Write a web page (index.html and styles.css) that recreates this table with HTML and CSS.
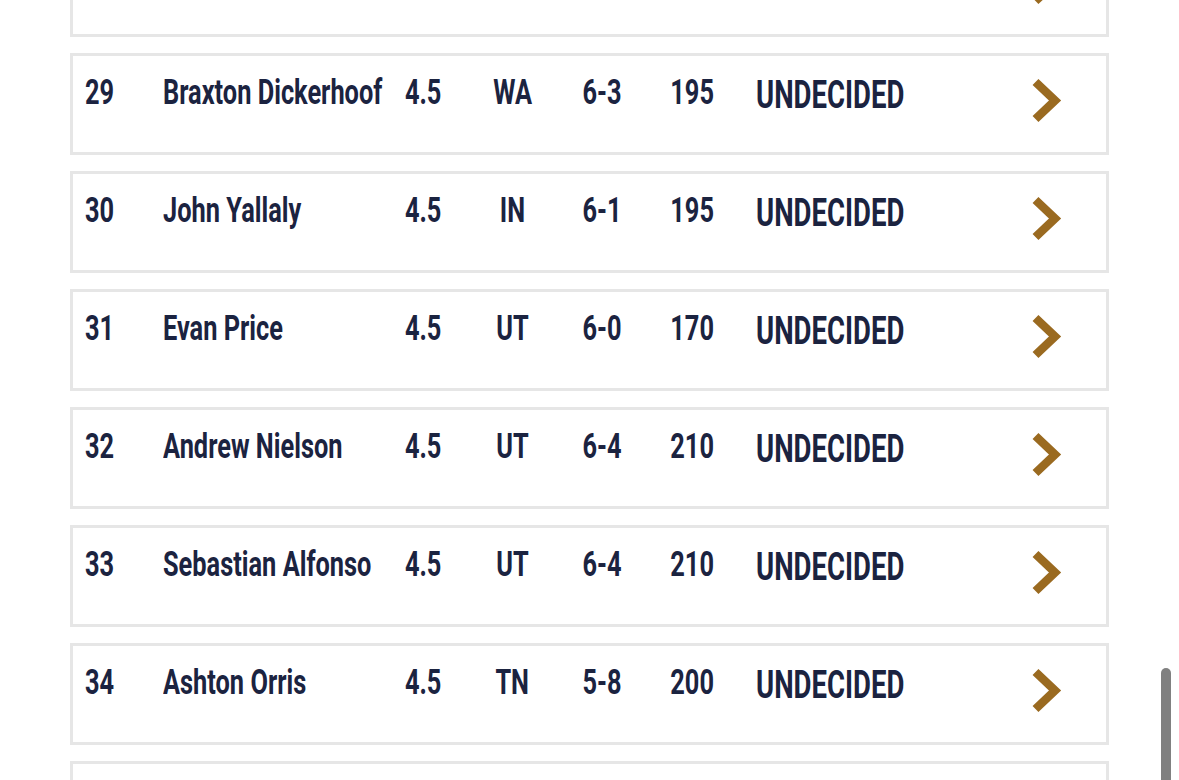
FILE: index.html
```html
<!DOCTYPE html>
<html lang="en">
<head>
<meta charset="utf-8">
<title>Rankings</title>
<link rel="stylesheet" href="styles.css">
</head>
<body>
<main class="board">
  <ul class="list">
    <li class="row">
      <span class="cell rank"></span>
      <span class="cell name"></span>
      <span class="cell num"></span>
      <span class="cell mid"></span>
      <span class="cell mid"></span>
      <span class="cell mid"></span>
      <span class="cell status"></span>
      <span class="cell go"><svg class="chev" viewBox="0 0 32 48" width="32" height="48"><polyline points="5.5,6 25,24.5 5.5,43"/></svg></span>
    </li>
    <li class="row">
      <span class="cell rank"><span class="t">29</span></span>
      <span class="cell name"><span class="t">Braxton Dickerhoof</span></span>
      <span class="cell num"><span class="t">4.5</span></span>
      <span class="cell mid"><span class="t">WA</span></span>
      <span class="cell mid"><span class="t">6-3</span></span>
      <span class="cell mid"><span class="t">195</span></span>
      <span class="cell status"><span class="t">UNDECIDED</span></span>
      <span class="cell go"><svg class="chev" viewBox="0 0 32 48" width="32" height="48"><polyline points="5.5,6 25,24.5 5.5,43"/></svg></span>
    </li>
    <li class="row">
      <span class="cell rank"><span class="t">30</span></span>
      <span class="cell name"><span class="t">John Yallaly</span></span>
      <span class="cell num"><span class="t">4.5</span></span>
      <span class="cell mid"><span class="t">IN</span></span>
      <span class="cell mid"><span class="t">6-1</span></span>
      <span class="cell mid"><span class="t">195</span></span>
      <span class="cell status"><span class="t">UNDECIDED</span></span>
      <span class="cell go"><svg class="chev" viewBox="0 0 32 48" width="32" height="48"><polyline points="5.5,6 25,24.5 5.5,43"/></svg></span>
    </li>
    <li class="row">
      <span class="cell rank"><span class="t">31</span></span>
      <span class="cell name"><span class="t">Evan Price</span></span>
      <span class="cell num"><span class="t">4.5</span></span>
      <span class="cell mid"><span class="t">UT</span></span>
      <span class="cell mid"><span class="t">6-0</span></span>
      <span class="cell mid"><span class="t">170</span></span>
      <span class="cell status"><span class="t">UNDECIDED</span></span>
      <span class="cell go"><svg class="chev" viewBox="0 0 32 48" width="32" height="48"><polyline points="5.5,6 25,24.5 5.5,43"/></svg></span>
    </li>
    <li class="row">
      <span class="cell rank"><span class="t">32</span></span>
      <span class="cell name"><span class="t">Andrew Nielson</span></span>
      <span class="cell num"><span class="t">4.5</span></span>
      <span class="cell mid"><span class="t">UT</span></span>
      <span class="cell mid"><span class="t">6-4</span></span>
      <span class="cell mid"><span class="t">210</span></span>
      <span class="cell status"><span class="t">UNDECIDED</span></span>
      <span class="cell go"><svg class="chev" viewBox="0 0 32 48" width="32" height="48"><polyline points="5.5,6 25,24.5 5.5,43"/></svg></span>
    </li>
    <li class="row">
      <span class="cell rank"><span class="t">33</span></span>
      <span class="cell name"><span class="t">Sebastian Alfonso</span></span>
      <span class="cell num"><span class="t">4.5</span></span>
      <span class="cell mid"><span class="t">UT</span></span>
      <span class="cell mid"><span class="t">6-4</span></span>
      <span class="cell mid"><span class="t">210</span></span>
      <span class="cell status"><span class="t">UNDECIDED</span></span>
      <span class="cell go"><svg class="chev" viewBox="0 0 32 48" width="32" height="48"><polyline points="5.5,6 25,24.5 5.5,43"/></svg></span>
    </li>
    <li class="row">
      <span class="cell rank"><span class="t">34</span></span>
      <span class="cell name"><span class="t">Ashton Orris</span></span>
      <span class="cell num"><span class="t">4.5</span></span>
      <span class="cell mid"><span class="t">TN</span></span>
      <span class="cell mid"><span class="t">5-8</span></span>
      <span class="cell mid"><span class="t">200</span></span>
      <span class="cell status"><span class="t">UNDECIDED</span></span>
      <span class="cell go"><svg class="chev" viewBox="0 0 32 48" width="32" height="48"><polyline points="5.5,6 25,24.5 5.5,43"/></svg></span>
    </li>
    <li class="row"></li>
  </ul>
</main>
<div class="scrollthumb"></div>
</body>
</html>
```
FILE: styles.css
```css
html, body {
  margin: 0;
  padding: 0;
  background: #ffffff;
  overflow: hidden;
}
body {
  font-family: Roboto, "Liberation Sans", sans-serif;
  color: #1b2340;
  height: 780px;
}
.board {
  padding: 0 70px;
}
.list {
  list-style: none;
  margin: -65px 0 0 0;
  padding: 0;
  display: flex;
  flex-direction: column;
  gap: 16px;
}
.row {
  box-sizing: border-box;
  height: 102px;
  border: 3px solid #e6e6e6;
  background: #fff;
  padding: 19px 0 0 12px;
  display: grid;
  grid-template-columns: 78px 216px 89px 89px 89px 92px 292px 32px;
  align-items: start;
}
.cell {
  white-space: nowrap;
  font-size: 35px;
  font-weight: 700;
  line-height: 35px;
  min-width: 0;
}
.t {
  display: inline-block;
  transform: scaleX(0.725);
  transform-origin: left center;
}
.mid, .num {
  text-align: center;
}
.mid .t, .num .t {
  transform-origin: center center;
}
.status {
  padding-left: 18px;
  font-size: 38px;
  line-height: 38px;
  margin-top: 1px;
}
.go {
  margin-top: 1px;
}
.chev {
  display: block;
}
.chev polyline {
  fill: none;
  stroke: #9a6a20;
  stroke-width: 8.5;
  stroke-linecap: butt;
  stroke-linejoin: miter;
}
.scrollthumb {
  position: fixed;
  left: 1161px;
  top: 668px;
  width: 10px;
  height: 140px;
  border-radius: 5px;
  background: #808080;
}
```
